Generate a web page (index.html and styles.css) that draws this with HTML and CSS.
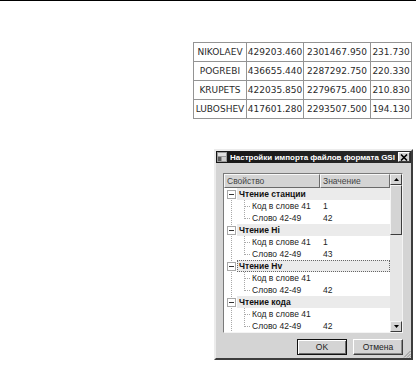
FILE: index.html
```html
<!DOCTYPE html>
<html lang="ru">
  <head>
    <meta charset="UTF-8" />
    <title>Импорт GSI</title>
    <link rel="stylesheet" href="styles.css">
  </head>
  <body>
    <div class="rule"></div>

    <table class="coords">
      <tr><td>NIKOLAEV</td><td>429203.460</td><td>2301467.950</td><td>231.730</td></tr>
      <tr><td>POGREBI</td><td>436655.440</td><td>2287292.750</td><td>220.330</td></tr>
      <tr><td>KRUPETS</td><td>422035.850</td><td>2279675.400</td><td>210.830</td></tr>
      <tr><td>LUBOSHEV</td><td>417601.280</td><td>2293507.500</td><td>194.130</td></tr>
    </table>

    <div class="dialog">
      <div class="titlebar">
        <svg class="app-icon" width="10" height="10" viewBox="0 0 10 10">
          <rect x="0" y="0" width="10" height="10" fill="#9a9a9a" />
          <rect x="1" y="1" width="8" height="3" fill="#e0e0e0" />
          <rect x="1" y="5" width="3" height="4" fill="#5a5a5a" />
          <rect x="5" y="5" width="4" height="4" fill="#cfcfcf" />
        </svg>
        <span class="title">Настройки импорта файлов формата GSI</span>
        <span class="close">
          <svg width="8" height="7" viewBox="0 0 8 7">
            <path d="M1 0.5 L7 6.5 M7 0.5 L1 6.5" stroke="#000" stroke-width="1.6" />
          </svg>
        </span>
      </div>

      <div class="dialog-body">
        <div class="listview">
          <div class="lv-main">
            <div class="lv-header">
              <span class="col-prop">Свойство</span>
              <span class="col-val">Значение</span>
            </div>

            <div class="row group first">
              <span class="gutter"><span class="minus"></span></span>
              <span class="node">Чтение станции</span>
            </div>
            <div class="row child">
              <span class="gutter"></span>
              <span class="prop">Код в слове 41</span><span class="val">1</span>
            </div>
            <div class="row child last">
              <span class="gutter"></span>
              <span class="prop">Слово 42-49</span><span class="val">42</span>
            </div>

            <div class="row group">
              <span class="gutter"><span class="minus"></span></span>
              <span class="node">Чтение Hi</span>
            </div>
            <div class="row child">
              <span class="gutter"></span>
              <span class="prop">Код в слове 41</span><span class="val">1</span>
            </div>
            <div class="row child last">
              <span class="gutter"></span>
              <span class="prop">Слово 42-49</span><span class="val">43</span>
            </div>

            <div class="row group">
              <span class="gutter"><span class="minus"></span></span>
              <span class="node focused">Чтение Hv</span>
            </div>
            <div class="row child">
              <span class="gutter"></span>
              <span class="prop">Код в слове 41</span><span class="val"></span>
            </div>
            <div class="row child last">
              <span class="gutter"></span>
              <span class="prop">Слово 42-49</span><span class="val">42</span>
            </div>

            <div class="row group">
              <span class="gutter"><span class="minus"></span></span>
              <span class="node">Чтение кода</span>
            </div>
            <div class="row child">
              <span class="gutter"></span>
              <span class="prop">Код в слове 41</span><span class="val"></span>
            </div>
            <div class="row child last">
              <span class="gutter"></span>
              <span class="prop">Слово 42-49</span><span class="val">42</span>
            </div>
          </div>

          <div class="scrollbar">
            <span class="sb-btn">
              <svg width="5" height="3" viewBox="0 0 5 3"><polygon points="2.5,0 5,3 0,3" fill="#000" /></svg>
            </span>
            <span class="sb-thumb"></span>
            <span class="sb-track"></span>
            <span class="sb-btn">
              <svg width="5" height="3" viewBox="0 0 5 3"><polygon points="0,0 5,0 2.5,3" fill="#000" /></svg>
            </span>
          </div>
        </div>

        <div class="buttons">
          <button class="btn default">OK</button>
          <button class="btn">Отмена</button>
          <svg class="grip" width="8" height="8" viewBox="0 0 8 8">
            <path d="M7.5 1 L1 7.5 M7.5 4 L4 7.5 M7.5 6.5 L6.5 7.5" stroke="#8a8a8a" stroke-width="1" />
          </svg>
        </div>
      </div>
    </div>
  </body>
</html>
```

FILE: styles.css
```css
* {
  margin: 0;
  padding: 0;
  box-sizing: border-box;
}

body {
  font-family: "Liberation Sans", Arial, sans-serif;
  background-color: #ffffff;
  color: #1a1a1a;
  width: 416px;
  height: 370px;
  overflow: hidden;
}

.rule {
  height: 1px;
  background-color: #000;
}

/* coordinates table */
.coords {
  margin: 41px 0 0 193px;
  border-collapse: collapse;
  font-family: "DejaVu Sans", sans-serif;
  font-size: 9px;
  color: #2a2a2a;
}

.coords td {
  height: 19px;
  border: 1px solid #949494;
  text-align: center;
  padding: 0;
}

.coords td:nth-child(1) { width: 53px; }
.coords td:nth-child(2) { width: 57px; }
.coords td:nth-child(3) { width: 67px; }
.coords td:nth-child(4) { width: 41px; }

/* dialog window */
.dialog {
  width: 199px;
  height: 211px;
  margin: 30px 0 0 214px;
  background-color: #d4d4d4;
  border: 2px solid;
  border-color: #ececec #3c3c3c #3c3c3c #ececec;
  display: flex;
  flex-direction: column;
}

.titlebar {
  height: 12px;
  display: flex;
  align-items: center;
  padding-left: 1px;
  background: linear-gradient(to right, #161616, #2c2c2c);
  color: #fff;
  font-size: 8px;
  font-weight: bold;
}

.app-icon {
  flex: none;
  margin-right: 3px;
}

.title {
  flex: 1;
  white-space: nowrap;
  overflow: hidden;
}

.close {
  flex: none;
  width: 12px;
  height: 10px;
  margin-right: 1px;
  display: flex;
  align-items: center;
  justify-content: center;
  background-color: #d4d4d4;
  border: 1px solid;
  border-color: #fff #3c3c3c #3c3c3c #fff;
}

.dialog-body {
  flex: 1;
  padding: 10px 8px 0 7px;
  font-size: 8.5px;
}

/* tree list */
.listview {
  height: 160px;
  display: flex;
  background-color: #fff;
  border: 1px solid;
  border-color: #7a7a7a #f4f4f4 #f4f4f4 #7a7a7a;
}

.lv-main {
  flex: 1;
  display: flex;
  flex-direction: column;
}

.lv-header {
  height: 14px;
  display: flex;
  color: #444;
}

.lv-header span {
  line-height: 12px;
  padding-left: 2px;
  background-color: #d4d4d4;
  border: 1px solid;
  border-color: #f8f8f8 #6a6a6a #6a6a6a #f8f8f8;
}

.col-prop { width: 96px; }
.col-val { flex: 1; }

.row {
  height: 12px;
  display: flex;
  line-height: 12px;
  white-space: nowrap;
}

.gutter {
  flex: none;
  display: flex;
  align-items: center;
}

.group .gutter {
  width: 13px;
  background: repeating-linear-gradient(to bottom, #a8a8a8 0 1px, transparent 1px 2px) 7px 0 / 1px 100% no-repeat;
}

.group.first .gutter {
  background-position: 7px 6px;
}

.minus {
  width: 9px;
  height: 9px;
  margin-left: 3px;
  border: 1px solid #a8a8a8;
  background: linear-gradient(#333, #333) center / 5px 1px no-repeat, #fff;
}

.node {
  flex: 1;
  padding-left: 2px;
  font-weight: bold;
  color: #111;
  background-color: #ebebeb;
}

.node.focused {
  padding-left: 1px;
  border: 1px dotted #666;
  line-height: 10px;
}

.child .gutter {
  width: 28px;
  background:
    repeating-linear-gradient(to bottom, #a8a8a8 0 1px, transparent 1px 2px) 7px 0 / 1px 100% no-repeat,
    repeating-linear-gradient(to bottom, #a8a8a8 0 1px, transparent 1px 2px) 20px 0 / 1px 100% no-repeat,
    repeating-linear-gradient(to right, #a8a8a8 0 1px, transparent 1px 2px) 21px 6px / 6px 1px no-repeat;
}

.child.last .gutter {
  background-size: 1px 100%, 1px 7px, 6px 1px;
}

.prop {
  width: 68px;
  color: #222;
}

.val {
  flex: 1;
  padding-left: 3px;
  color: #222;
}

/* scrollbar */
.scrollbar {
  width: 12px;
  display: flex;
  flex-direction: column;
  background-color: #e6e6e6;
}

.sb-btn,
.sb-thumb {
  background-color: #d4d4d4;
  border: 1px solid;
  border-color: #f4f4f4 #3c3c3c #3c3c3c #f4f4f4;
}

.sb-btn {
  height: 11px;
  display: flex;
  align-items: center;
  justify-content: center;
}

.sb-thumb {
  height: 50px;
}

.sb-track {
  flex: 1;
}

/* buttons */
.buttons {
  display: flex;
  justify-content: flex-end;
  margin: 6px -8px 0 0;
  height: 19px;
}

.btn {
  width: 50px;
  height: 16px;
  margin-left: 6px;
  font-family: "Liberation Sans", Arial, sans-serif;
  font-size: 8.5px;
  color: #222;
  background-color: #d4d4d4;
  border: 1px solid;
  border-color: #fff #3c3c3c #3c3c3c #fff;
  box-shadow: inset -1px -1px #8a8a8a;
}

.btn.default {
  border: 1px solid #111;
  box-shadow: inset 1px 1px #fff, inset -1px -1px #6a6a6a;
}

.grip {
  align-self: flex-end;
}
```
